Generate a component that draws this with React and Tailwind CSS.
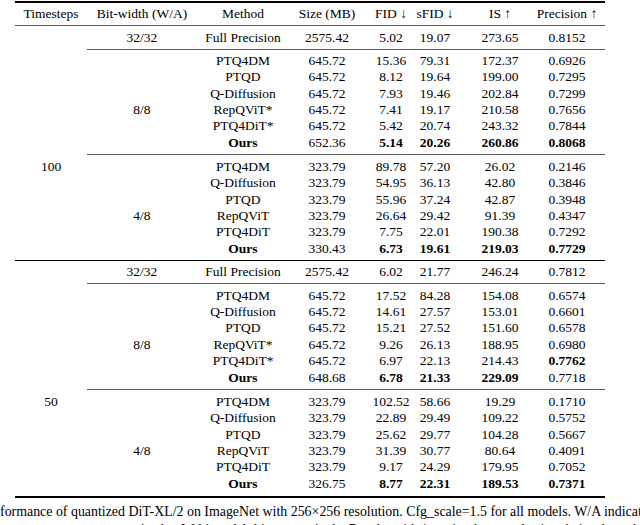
import React from "react";

const COLS = "grid grid-cols-[72px_110px_92px_76px_52px_36px_94px_40px_18px]";

const sections = [
  {
    t: "100",
    fp: ["2575.42", "5.02", "19.07", "273.65", "0.8152"],
    groups: [
      {
        bw: "8/8",
        rows: [
          ["PTQ4DM", "645.72", "15.36", "79.31", "172.37", "0.6926"],
          ["PTQD", "645.72", "8.12", "19.64", "199.00", "0.7295"],
          ["Q-Diffusion", "645.72", "7.93", "19.46", "202.84", "0.7299"],
          ["RepQViT*", "645.72", "7.41", "19.17", "210.58", "0.7656"],
          ["PTQ4DiT*", "645.72", "5.42", "20.74", "243.32", "0.7844"],
          ["Ours", "652.36", "5.14", "20.26", "260.86", "0.8068"],
        ],
        bold: [[5, 0], [5, 2], [5, 3], [5, 4], [5, 5]],
      },
      {
        bw: "4/8",
        rows: [
          ["PTQ4DM", "323.79", "89.78", "57.20", "26.02", "0.2146"],
          ["Q-Diffusion", "323.79", "54.95", "36.13", "42.80", "0.3846"],
          ["PTQD", "323.79", "55.96", "37.24", "42.87", "0.3948"],
          ["RepQViT", "323.79", "26.64", "29.42", "91.39", "0.4347"],
          ["PTQ4DiT", "323.79", "7.75", "22.01", "190.38", "0.7292"],
          ["Ours", "330.43", "6.73", "19.61", "219.03", "0.7729"],
        ],
        bold: [[5, 0], [5, 2], [5, 3], [5, 4], [5, 5]],
        tLabel: true,
      },
    ],
  },
  {
    t: "50",
    fp: ["2575.42", "6.02", "21.77", "246.24", "0.7812"],
    groups: [
      {
        bw: "8/8",
        rows: [
          ["PTQ4DM", "645.72", "17.52", "84.28", "154.08", "0.6574"],
          ["Q-Diffusion", "645.72", "14.61", "27.57", "153.01", "0.6601"],
          ["PTQD", "645.72", "15.21", "27.52", "151.60", "0.6578"],
          ["RepQViT*", "645.72", "9.26", "26.13", "188.95", "0.6980"],
          ["PTQ4DiT*", "645.72", "6.97", "22.13", "214.43", "0.7762"],
          ["Ours", "648.68", "6.78", "21.33", "229.09", "0.7718"],
        ],
        bold: [[4, 5], [5, 0], [5, 2], [5, 3], [5, 4]],
      },
      {
        bw: "4/8",
        rows: [
          ["PTQ4DM", "323.79", "102.52", "58.66", "19.29", "0.1710"],
          ["Q-Diffusion", "323.79", "22.89", "29.49", "109.22", "0.5752"],
          ["PTQD", "323.79", "25.62", "29.77", "104.28", "0.5667"],
          ["RepQViT", "323.79", "31.39", "30.77", "80.64", "0.4091"],
          ["PTQ4DiT", "323.79", "9.17", "24.29", "179.95", "0.7052"],
          ["Ours", "326.75", "8.77", "22.31", "189.53", "0.7371"],
        ],
        bold: [[5, 0], [5, 2], [5, 3], [5, 4], [5, 5]],
        tLabel: true,
      },
    ],
  },
];

function Cell({ children, bold }) {
  return (
    <div className={"flex items-center justify-center whitespace-nowrap" + (bold ? " font-bold" : "")}>
      {children}
    </div>
  );
}

function Row({ cells, bolds = [], className = "h-[16.4px] leading-[16.4px]" }) {
  return (
    <div className={COLS + " " + className}>
      {cells.map((c, i) => (
        <Cell key={i} bold={bolds.includes(i)}>
          {c}
        </Cell>
      ))}
      <div />
    </div>
  );
}

const ThinRule = ({ partial }) => (
  <div className={"h-px bg-[#5a5a5a]" + (partial ? " ml-[72px]" : "")} />
);

export default function App() {
  return (
    <div className="w-[640px] h-[525px] overflow-hidden bg-white text-black font-['Liberation_Serif','Times_New_Roman',serif]">
      <div className="ml-[15px] w-[590px] pt-px text-[13.5px]">
        <div className="h-[1.5px] bg-black" />
        <Row
          className="h-[22px] leading-[22px]"
          cells={["Timesteps", "Bit-width (W/A)", "Method", "Size (MB)", "FID ↓", "sFID ↓", "IS ↑", "Precision ↑"]}
        />
        <ThinRule />
        {sections.map((s, si) => (
          <div key={si}>
            {si > 0 && <div className="h-px bg-black" />}
            <Row
              className={si === 0 ? "h-[23px] leading-[23px]" : "h-[22px] leading-[22px]"}
              cells={["", "32/32", "Full Precision", ...s.fp]}
            />
            {s.groups.map((g, gi) => (
              <div key={gi}>
                <ThinRule partial />
                <div className={gi === 0 ? "py-[3.3px]" : si === 0 ? "py-[3.3px]" : "pt-[3.5px] pb-[4px]"}>
                  {g.rows.map((r, ri) => {
                    const bolds = g.bold.filter(([a]) => a === ri).map(([, b]) => b + 2);
                    return (
                      <Row
                        key={ri}
                        bolds={bolds}
                        cells={[
                          g.tLabel && ri === 0 ? s.t : "",
                          ri === 3 ? g.bw : "",
                          ...r,
                        ]}
                      />
                    );
                  })}
                </div>
              </div>
            ))}
          </div>
        ))}
        <div className="h-[1.5px] bg-black" />
      </div>
      <div className="mt-[5px] text-[13.9px] leading-[18px] whitespace-nowrap">
        <div>formance of quantized DiT-XL/2 on ImageNet with 256×256 resolution. Cfg_scale=1.5 for all models. W/A indicate</div>
        <div className="pl-[110px]">quantized to W-bit and A-bit, respectively. Results with * are implemented using their released code.</div>
      </div>
    </div>
  );
}
